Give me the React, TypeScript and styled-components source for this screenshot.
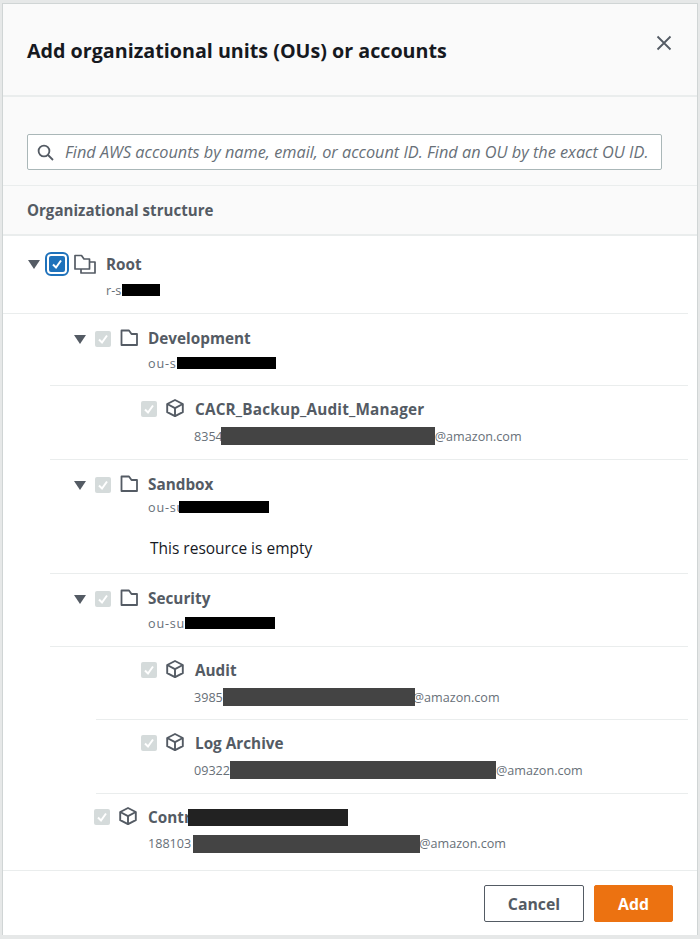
import React from 'react'
import styled, { createGlobalStyle } from 'styled-components'

const GlobalStyle = createGlobalStyle`
  html, body {
    margin: 0;
    padding: 0;
    background: #e6e8e8;
  }
  * {
    box-sizing: border-box;
  }
`

const Modal = styled.div`
  width: 694px;
  height: 931px;
  margin: 4px 0 0 3px;
  background: #fff;
  font-family: 'Open Sans', 'Noto Sans', sans-serif;
  color: #545b64;
  display: flex;
  flex-direction: column;
  overflow: hidden;
  box-shadow: 0 0 0 1px #d0d5d5;
`

const Header = styled.header`
  height: 93px;
  flex: none;
  background: #fafafa;
  border-bottom: 2px solid #eaeded;
  display: flex;
  justify-content: space-between;
  padding: 33px 24px 0 24px;
`

const Title = styled.h1`
  margin: 0;
  font-size: 19.7px;
  line-height: 28px;
  font-weight: 700;
  color: #16191f;
`

const CloseButton = styled.button`
  border: 0;
  background: none;
  padding: 0;
  width: 18px;
  height: 18px;
  margin-top: -3px;
  color: #545b64;
`

const SearchSection = styled.div`
  height: 89px;
  flex: none;
  background: #fafafa;
  padding: 37px 35px 0 24px;
  border-bottom: 1px solid #eaeded;
`

const SearchBox = styled.div`
  height: 36px;
  background: #fff;
  border: 1px solid #aab7b8;
  border-radius: 2px;
  display: flex;
  align-items: center;
  gap: 11px;
  padding-left: 9px;
  color: #545b64;
`

const Placeholder = styled.span`
  font-size: 16.3px;
  font-style: italic;
  white-space: nowrap;
  color: #687078;
`

const SectionHead = styled.div`
  height: 50px;
  flex: none;
  background: #fafafa;
  border-bottom: 2px solid #eaeded;
  padding: 0 24px;
  display: flex;
  align-items: center;
  font-size: 15.1px;
  font-weight: 700;
`

const Tree = styled.div`
  flex: 1;
  padding-right: 9px;
`

const Row = styled.div<{ $indent: number; $height: number }>`
  height: ${(p) => p.$height}px;
  margin-left: ${(p) => p.$indent}px;
  border-bottom: 1px solid #eaeded;
`

const LastRow = styled.div`
  height: 76px;
`

const RowTop = styled.div<{ $pad: number; $top: number }>`
  display: flex;
  align-items: center;
  padding: ${(p) => p.$top}px 0 0 ${(p) => p.$pad}px;
  height: ${(p) => p.$top + 20}px;
`

const Caret = styled.span`
  width: 0;
  height: 0;
  flex: none;
  border-left: 6px solid transparent;
  border-right: 6px solid transparent;
  border-top: 9px solid #545b64;
  margin-right: 9px;
`

const CheckBox = styled.span<{ $active?: boolean }>`
  width: 16px;
  height: 16px;
  flex: none;
  border-radius: 2px;
  display: flex;
  align-items: center;
  justify-content: center;
  background: ${(p) => (p.$active ? '#1f72bb' : '#d5dbdb')};
  color: #fff;
  outline: ${(p) => (p.$active ? '2.5px solid #1f72bb' : 'none')};
  outline-offset: 2px;
`

const IconSlot = styled.span<{ $width: number }>`
  width: ${(p) => p.$width}px;
  height: 20px;
  flex: none;
  margin-left: 9px;
  color: #545b64;
  display: flex;
`

const Name = styled.span<{ $lift?: number; $spread?: boolean }>`
  position: relative;
  top: ${(p) => -(p.$lift || 0)}px;
  margin-left: 8px;
  font-size: 15.3px;
  line-height: 20px;
  font-weight: 700;
  white-space: nowrap;
  letter-spacing: ${(p) => (p.$spread ? '0.18px' : 'normal')};
`

const Sub = styled.div<{ $left: number; $top: number; $spaced?: boolean }>`
  position: relative;
  display: inline-block;
  margin: ${(p) => p.$top}px 0 0 ${(p) => p.$left}px;
  font-size: 12.6px;
  line-height: 16px;
  white-space: nowrap;
  color: #687078;
  letter-spacing: ${(p) => (p.$spaced ? '0.8px' : 'normal')};
`

const Redact = styled.span<{ $left: number; $width: number; $top: number; $height: number; $color: string }>`
  position: absolute;
  left: ${(p) => p.$left}px;
  top: ${(p) => p.$top}px;
  width: ${(p) => p.$width}px;
  height: ${(p) => p.$height}px;
  background: ${(p) => p.$color};
`

const Spacer = styled.span<{ $width: number }>`
  display: inline-block;
  width: ${(p) => p.$width}px;
`

const Empty = styled.div`
  margin: 21px 0 0 100px;
  font-size: 15.5px;
  line-height: 20px;
  color: #16191f;
`

const Footer = styled.footer`
  flex: 1;
  border-top: 1px solid #eaeded;
  display: flex;
  justify-content: flex-end;
  align-items: flex-start;
  gap: 10px;
  padding: 14px 24px 0 0;
`

const Button = styled.button<{ $primary?: boolean }>`
  height: 37px;
  width: ${(p) => (p.$primary ? 79 : 100)}px;
  border-radius: 2px;
  border: 1px solid ${(p) => (p.$primary ? '#ec7211' : '#545b64')};
  background: ${(p) => (p.$primary ? '#ec7211' : '#fff')};
  color: ${(p) => (p.$primary ? '#fff' : '#545b64')};
  font-family: inherit;
  font-size: 15.8px;
  font-weight: 700;
`

const Check = () => (
  <svg width="12" height="12" viewBox="0 0 12 12" fill="none" stroke="currentColor" strokeWidth="2">
    <path d="M2 6.5 5 9.5 10 2.5" />
  </svg>
)

const Folder = () => (
  <svg width="18" height="18" viewBox="0 0 18 18" fill="none" stroke="currentColor" strokeWidth="1.8" strokeLinejoin="round">
    <path d="M1.5 1.5h7.5l2.5 3.5H17v11H1.5z" />
  </svg>
)

const Folders = () => (
  <svg width="22" height="20" viewBox="0 0 22 20" fill="none" stroke="currentColor" strokeWidth="1.7" strokeLinejoin="round">
    <path d="M1 1.5h6.5L10 5h5.5v10H1z" />
    <path d="M15.5 8H21v11H7v-4" />
  </svg>
)

const Cube = () => (
  <svg width="18" height="18" viewBox="0 0 18 18" fill="none" stroke="currentColor" strokeWidth="1.9" strokeLinejoin="round">
    <path d="M9 1 16.8 5v8.2L9 17.2 1.2 13.2V5z" />
    <path d="M1.2 5 9 9.2 16.8 5M9 9.2v8" />
  </svg>
)

const Close = () => (
  <svg width="18" height="18" viewBox="0 0 18 18" fill="none" stroke="currentColor" strokeWidth="1.8">
    <path d="M2.5 2.5l13 13M15.5 2.5l-13 13" />
  </svg>
)

const Search = () => (
  <svg width="17" height="17" viewBox="0 0 17 17" fill="none" stroke="currentColor" strokeWidth="1.8">
    <circle cx="7" cy="7" r="5.4" />
    <path d="M11 11l5 5" />
  </svg>
)

const App: React.FC = () => {
  return (
    <>
      <GlobalStyle />
      <Modal>
        <Header>
          <Title>Add organizational units (OUs) or accounts</Title>
          <CloseButton aria-label="Close">
            <Close />
          </CloseButton>
        </Header>
        <SearchSection>
          <SearchBox>
            <Search />
            <Placeholder>Find AWS accounts by name, email, or account ID. Find an OU by the exact OU ID.</Placeholder>
          </SearchBox>
        </SearchSection>
        <SectionHead>Organizational structure</SectionHead>
        <Tree>
          <Row $indent={0} $height={78}>
            <RowTop $pad={25} $top={18}>
              <Caret />
              <CheckBox $active>
                <Check />
              </CheckBox>
              <IconSlot $width={24}>
                <Folders />
              </IconSlot>
              <Name>Root</Name>
            </RowTop>
            <Sub $left={103} $top={9}>
              r-s
              <Redact $left={16} $width={38} $top={1} $height={12} $color="#000" />
            </Sub>
          </Row>
          <Row $indent={47} $height={72}>
            <RowTop $pad={24} $top={15}>
              <Caret />
              <CheckBox>
                <Check />
              </CheckBox>
              <IconSlot $width={20}>
                <Folder />
              </IconSlot>
              <Name $lift={1}>Development</Name>
            </RowTop>
            <Sub $left={98} $top={7} $spaced>
              ou-s
              <Redact $left={29} $width={99} $top={1} $height={12} $color="#000" />
            </Sub>
          </Row>
          <Row $indent={47} $height={74}>
            <RowTop $pad={91} $top={13}>
              <CheckBox>
                <Check />
              </CheckBox>
              <IconSlot $width={21}>
                <Cube />
              </IconSlot>
              <Name $spread>CACR_Backup_Audit_Manager</Name>
            </RowTop>
            <Sub $left={144} $top={10}>
              8354
              <Redact $left={27} $width={214} $top={-2} $height={18} $color="#444" />
              <Spacer $width={212} />
              @amazon.com
            </Sub>
          </Row>
          <Row $indent={47} $height={114}>
            <RowTop $pad={24} $top={15}>
              <Caret />
              <CheckBox>
                <Check />
              </CheckBox>
              <IconSlot $width={20}>
                <Folder />
              </IconSlot>
              <Name $lift={1}>Sandbox</Name>
            </RowTop>
            <Sub $left={98} $top={5} $spaced>
              ou-su
              <Redact $left={31} $width={90} $top={1} $height={12} $color="#000" />
            </Sub>
            <Empty>This resource is empty</Empty>
          </Row>
          <Row $indent={47} $height={73}>
            <RowTop $pad={24} $top={15}>
              <Caret />
              <CheckBox>
                <Check />
              </CheckBox>
              <IconSlot $width={20}>
                <Folder />
              </IconSlot>
              <Name $lift={1}>Security</Name>
            </RowTop>
            <Sub $left={98} $top={7} $spaced>
              ou-su
              <Redact $left={37} $width={90} $top={1} $height={12} $color="#000" />
            </Sub>
          </Row>
          <Row $indent={93} $height={73}>
            <RowTop $pad={45} $top={13}>
              <CheckBox>
                <Check />
              </CheckBox>
              <IconSlot $width={21}>
                <Cube />
              </IconSlot>
              <Name>Audit</Name>
            </RowTop>
            <Sub $left={98} $top={10}>
              3985
              <Redact $left={29} $width={192} $top={-2} $height={18} $color="#444" />
              <Spacer $width={190} />
              @amazon.com
            </Sub>
          </Row>
          <Row $indent={93} $height={74}>
            <RowTop $pad={45} $top={13}>
              <CheckBox>
                <Check />
              </CheckBox>
              <IconSlot $width={21}>
                <Cube />
              </IconSlot>
              <Name>Log Archive</Name>
            </RowTop>
            <Sub $left={98} $top={10}>
              09322
              <Redact $left={36} $width={266} $top={-2} $height={18} $color="#444" />
              <Spacer $width={266} />
              @amazon.com
            </Sub>
          </Row>
          <LastRow>
            <RowTop $pad={91} $top={13}>
              <CheckBox>
                <Check />
              </CheckBox>
              <IconSlot $width={21}>
                <Cube />
              </IconSlot>
              <Name>
                Contr
                <Redact $left={40} $width={160} $top={2} $height={17} $color="#222" />
              </Name>
            </RowTop>
            <Sub $left={145} $top={9}>
              188103
              <Redact $left={45} $width={227} $top={-1} $height={18} $color="#444" />
              <Spacer $width={228} />
              @amazon.com
            </Sub>
          </LastRow>
        </Tree>
        <Footer>
          <Button>Cancel</Button>
          <Button $primary>Add</Button>
        </Footer>
      </Modal>
    </>
  )
}

export default App
